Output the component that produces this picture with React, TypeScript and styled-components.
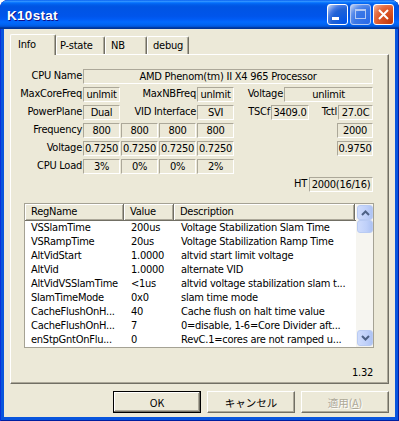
import React from "react";
import styled, { createGlobalStyle } from "styled-components";

const GlobalStyle = createGlobalStyle`
  html, body { margin: 0; padding: 0; background: #ffffff; }
  body {
    font-family: "DejaVu Sans Condensed", "DejaVu Sans", "Noto Sans CJK JP", sans-serif;
    font-stretch: condensed;
    font-size: 11px;
    letter-spacing: -0.25px;
    color: #000;
  }
  * { box-sizing: border-box; }
`;

const Window = styled.div`
  width: 399px;
  height: 421px;
  display: flex;
  flex-direction: column;
  background: #0855dd;
  border-radius: 8px 8px 0 0;
  overflow: hidden;
  box-shadow: inset 1px 0 #0831d9, inset -1px 0 #001ea0, inset 0 -1px #001ea0;
`;

const TitleBar = styled.div`
  height: 29px;
  flex: none;
  display: flex;
  align-items: center;
  padding: 0 5px 0 7px;
  border-radius: 8px 8px 0 0;
  background: linear-gradient(
    to bottom,
    #0058ee 0%,
    #3593ff 4%,
    #288eff 6%,
    #127dff 8%,
    #036ffc 10%,
    #0262ee 14%,
    #0057e5 20%,
    #0054e3 24%,
    #0055eb 56%,
    #005bf5 66%,
    #026afe 76%,
    #0062ef 86%,
    #0052d6 92%,
    #0040ab 94%,
    #003092 100%
  );
`;

const Title = styled.div`
  flex: 1;
  color: #fff;
  font-family: "Liberation Sans", Arial, sans-serif;
  font-stretch: normal;
  font-weight: bold;
  font-size: 13.5px;
  letter-spacing: 0.3px;
  text-shadow: 1px 1px #0f1089;
  padding-top: 1px;
`;

const CaptionButtons = styled.div`
  display: flex;
  gap: 2px;
`;

const CaptionButton = styled.div<{ $kind: "min" | "max" | "close" }>`
  width: 21px;
  height: 21px;
  border: 1px solid ${(p) => (p.$kind === "max" ? "#b4c9f2" : "#ffffff")};
  border-radius: 3px;
  display: flex;
  align-items: center;
  justify-content: center;
  background: ${(p) =>
    p.$kind === "close"
      ? "radial-gradient(circle at 90% 90%, #c33a0c 0%, #df5a2c 55%, #e56f45 70%, #f0a58a 92%, #ffffff 100%)"
      : p.$kind === "max"
      ? "radial-gradient(circle at 90% 90%, #2a6ae8 0%, #3b78e6 55%, #5a8deb 72%, #a9c1f0 92%, #dbe6fb 100%)"
      : "radial-gradient(circle at 90% 90%, #0054e9 0%, #2263d5 55%, #4479e4 70%, #a3bbec 90%, #ffffff 100%)"};
`;

const Client = styled.div`
  flex: 1;
  margin: 0 4px 4px 4px;
  background: #ece9d8;
  display: flex;
  flex-direction: column;
  padding: 5px 6px 4px 6px;
`;

const TabStrip = styled.div`
  height: 20px;
  display: flex;
  align-items: flex-end;
  position: relative;
  z-index: 2;
`;

const Tab = styled.div<{ $active?: boolean; $w: number; $pl: number }>`
  width: ${(p) => p.$w}px;
  height: ${(p) => (p.$active ? 21 : 18)}px;
  margin-bottom: ${(p) => (p.$active ? -1 : 0)}px;
  padding-left: ${(p) => p.$pl}px;
  padding-top: ${(p) => (p.$active ? 3 : 2)}px;
  background: #ece9d8;
  border-top: 1px solid #ffffff;
  border-left: 1px solid #ffffff;
  border-right: 1px solid #716f64;
  box-shadow: inset -1px 0 #aca899;
  border-radius: 2px 2px 0 0;
  font-size: 11px;
  line-height: 13px;
  white-space: nowrap;
`;

const Panel = styled.div`
  height: 330px;
  display: flex;
  flex-direction: column;
  border-top: 1px solid #ffffff;
  border-left: 1px solid #ffffff;
  border-right: 1px solid #716f64;
  border-bottom: 1px solid #716f64;
  box-shadow: inset -1px -1px #aca899;
  padding: 14px 15px 0 0;
`;

const InfoRows = styled.div`
  display: flex;
  flex-direction: column;
  gap: 3px;
`;

const Row = styled.div<{ $end?: boolean }>`
  height: 15px;
  display: flex;
  justify-content: ${(p) => (p.$end ? "flex-end" : "flex-start")};
`;

const Label = styled.div<{ $w?: number }>`
  ${(p) => (p.$w ? `width: ${p.$w}px;` : "")}
  flex: none;
  text-align: right;
  padding-right: 1px;
  line-height: 14px;
  white-space: nowrap;
`;

const Field = styled.div<{ $w: number; $ml?: number }>`
  width: ${(p) => p.$w}px;
  margin-left: ${(p) => p.$ml ?? 0}px;
  flex: none;
  border-top: 1px solid #aca899;
  border-left: 1px solid #aca899;
  border-bottom: 1px solid #ffffff;
  border-right: 1px solid #ffffff;
  text-align: center;
  line-height: 13px;
  white-space: nowrap;
  overflow: hidden;
`;

const ListView = styled.div`
  margin: 11px 0 0 13px;
  width: 350px;
  height: 145px;
  border: 1px solid #a5a294;
  background: #ffffff;
  display: flex;
`;

const ListMain = styled.div`
  flex: 1;
  display: flex;
  flex-direction: column;
  overflow: hidden;
`;

const Header = styled.div`
  height: 17px;
  display: flex;
  background: #ece9d8;
  flex: none;
`;

const HeaderCell = styled.div<{ $w?: number }>`
  ${(p) => (p.$w ? `width: ${p.$w}px; flex: none;` : "flex: 1;")}
  height: 17px;
  padding-left: 6px;
  line-height: 15px;
  border-right: 1px solid #716f64;
  border-bottom: 1px solid #716f64;
  box-shadow: inset 1px 1px #ffffff, inset -1px -1px #aca899;
  white-space: nowrap;
  overflow: hidden;
`;

const ListRow = styled.div`
  height: 14px;
  display: flex;
  flex: none;
`;

const Cell = styled.div<{ $w: number; $pl: number }>`
  width: ${(p) => p.$w}px;
  flex: none;
  padding-left: ${(p) => p.$pl}px;
  line-height: 14px;
  white-space: nowrap;
  overflow: hidden;
`;

const ScrollBar = styled.div`
  width: 17px;
  flex: none;
  display: flex;
  flex-direction: column;
  background: #f6f5f0;
  padding: 1px 0 1px 1px;
`;

const ScrollPart = styled.div<{ $h: number }>`
  height: ${(p) => p.$h}px;
  flex: none;
  border: 1px solid #b9cbf3;
  border-radius: 3px;
  background: linear-gradient(to right, #cfdcfc 0%, #bfd0f9 60%, #aec3f3 100%);
  display: flex;
  align-items: center;
  justify-content: center;
`;

const ScrollSpace = styled.div`
  flex: 1;
`;

const Version = styled.div`
  margin-top: 18px;
  text-align: right;
  line-height: 13px;
`;

const ButtonRow = styled.div`
  margin-top: 7px;
  display: flex;
  justify-content: flex-end;
  gap: 6px;
`;

const DialogButton = styled.div<{ $default?: boolean; $disabled?: boolean }>`
  width: 88px;
  height: 22px;
  display: flex;
  align-items: center;
  justify-content: center;
  font-family: "Noto Sans CJK JP", "DejaVu Sans Condensed", sans-serif;
  font-stretch: normal;
  font-size: 10.5px;
  letter-spacing: 0;
  background: #ece9d8;
  border: 1px solid;
  border-color: ${(p) => (p.$default ? "#000000" : "#ffffff #716f64 #716f64 #ffffff")};
  box-shadow: ${(p) =>
    p.$default
      ? "inset -1px -1px #716f64, inset 1px 1px #ffffff, inset -2px -2px #aca899"
      : "inset -1px -1px #aca899"};
  color: ${(p) => (p.$disabled ? "#aca899" : "#000000")};
  text-shadow: ${(p) => (p.$disabled ? "1px 1px #ffffff" : "none")};
`;

const cols = [99, 50, 181];

const rows: [string, string, string][] = [
  ["VSSlamTime", "200us", "Voltage Stabilization Slam Time"],
  ["VSRampTime", "20us", "Voltage Stabilization Ramp Time"],
  ["AltVidStart", "1.0000", "altvid start limit voltage"],
  ["AltVid", "1.0000", "alternate VID"],
  ["AltVidVSSlamTime", "<1us", "altvid voltage stabilization slam t..."],
  ["SlamTimeMode", "0x0", "slam time mode"],
  ["CacheFlushOnH...", "40", "Cache flush on halt time value"],
  ["CacheFlushOnH...", "7", "0=disable, 1-6=Core Divider aft..."],
  ["enStpGntOnFlu...", "0", "RevC.1=cores are not ramped u..."],
];

const Chevron = ({ up }: { up?: boolean }) => (
  <svg width="9" height="6" viewBox="0 0 9 6">
    <path
      d={up ? "M1 5 L4.5 1.5 L8 5" : "M1 1 L4.5 4.5 L8 1"}
      fill="none"
      stroke="#4d6185"
      strokeWidth="2"
    />
  </svg>
);

export default function App() {
  return (
    <>
      <GlobalStyle />
      <Window>
        <TitleBar>
          <Title>K10stat</Title>
          <CaptionButtons>
            <CaptionButton $kind="min">
              <svg width="19" height="19" viewBox="0 0 19 19">
                <rect x="4" y="12" width="7" height="3" fill="#ffffff" />
              </svg>
            </CaptionButton>
            <CaptionButton $kind="max">
              <svg width="19" height="19" viewBox="0 0 19 19">
                <rect x="4.5" y="4.5" width="10" height="9" fill="none" stroke="#b4c9f2" strokeWidth="1" />
                <rect x="4" y="4" width="11" height="2" fill="#b4c9f2" />
              </svg>
            </CaptionButton>
            <CaptionButton $kind="close">
              <svg width="19" height="19" viewBox="0 0 19 19">
                <path d="M5 5 L14 14 M14 5 L5 14" stroke="#ffffff" strokeWidth="2" />
              </svg>
            </CaptionButton>
          </CaptionButtons>
        </TitleBar>
        <Client>
          <TabStrip>
            <Tab $active $w={46} $pl={7}>Info</Tab>
            <Tab $w={49} $pl={3}>P-state</Tab>
            <Tab $w={42} $pl={5}>NB</Tab>
            <Tab $w={42} $pl={5}>debug</Tab>
          </TabStrip>
          <Panel>
            <InfoRows>
              <Row>
                <Label $w={72}>CPU Name</Label>
                <Field $w={290}>AMD Phenom(tm) II X4 965 Processor</Field>
              </Row>
              <Row>
                <Label $w={72}>MaxCoreFreq</Label>
                <Field $w={37}>unlmit</Field>
                <Label $w={77}>MaxNBFreq</Label>
                <Field $w={37}>unlmit</Field>
                <Label $w={50}>Voltage</Label>
                <Field $w={89}>unlimit</Field>
              </Row>
              <Row>
                <Label $w={72}>PowerPlane</Label>
                <Field $w={37}>Dual</Field>
                <Label $w={77}>VID Interface</Label>
                <Field $w={37}>SVI</Field>
                <Label $w={37}>TSCf</Label>
                <Field $w={38}>3409.0</Field>
                <Label $w={29}>Tctl</Label>
                <Field $w={35}>27.0C</Field>
              </Row>
              <Row>
                <Label $w={72}>Frequency</Label>
                <Field $w={37}>800</Field>
                <Field $w={37} $ml={1}>800</Field>
                <Field $w={37} $ml={1}>800</Field>
                <Field $w={37} $ml={1}>800</Field>
                <Field $w={36} $ml={103}>2000</Field>
              </Row>
              <Row>
                <Label $w={72}>Voltage</Label>
                <Field $w={37}>0.7250</Field>
                <Field $w={37} $ml={1}>0.7250</Field>
                <Field $w={37} $ml={1}>0.7250</Field>
                <Field $w={37} $ml={1}>0.7250</Field>
                <Field $w={36} $ml={103}>0.9750</Field>
              </Row>
              <Row>
                <Label $w={72}>CPU Load</Label>
                <Field $w={37}>3%</Field>
                <Field $w={37} $ml={1}>0%</Field>
                <Field $w={37} $ml={1}>0%</Field>
                <Field $w={37} $ml={1}>2%</Field>
              </Row>
              <Row $end>
                <Label>HT</Label>
                <Field $w={64} $ml={1}>2000(16/16)</Field>
              </Row>
            </InfoRows>
            <ListView>
              <ListMain>
                <Header>
                  <HeaderCell $w={cols[0]}>RegName</HeaderCell>
                  <HeaderCell $w={cols[1]}>Value</HeaderCell>
                  <HeaderCell $w={cols[2]}>Description</HeaderCell>
                  <HeaderCell />
                </Header>
                {rows.map((r, i) => (
                  <ListRow key={i}>
                    <Cell $w={cols[0]} $pl={6}>{r[0]}</Cell>
                    <Cell $w={cols[1]} $pl={7}>{r[1]}</Cell>
                    <Cell $w={cols[2]} $pl={7}>{r[2]}</Cell>
                  </ListRow>
                ))}
              </ListMain>
              <ScrollBar>
                <ScrollPart $h={15}>
                  <Chevron up />
                </ScrollPart>
                <ScrollPart $h={13} />
                <ScrollSpace />
                <ScrollPart $h={16}>
                  <Chevron />
                </ScrollPart>
              </ScrollBar>
            </ListView>
            <Version>1.32</Version>
          </Panel>
          <ButtonRow>
            <DialogButton $default>OK</DialogButton>
            <DialogButton>キャンセル</DialogButton>
            <DialogButton $disabled>
              適用(<u>A</u>)
            </DialogButton>
          </ButtonRow>
        </Client>
      </Window>
    </>
  );
}
